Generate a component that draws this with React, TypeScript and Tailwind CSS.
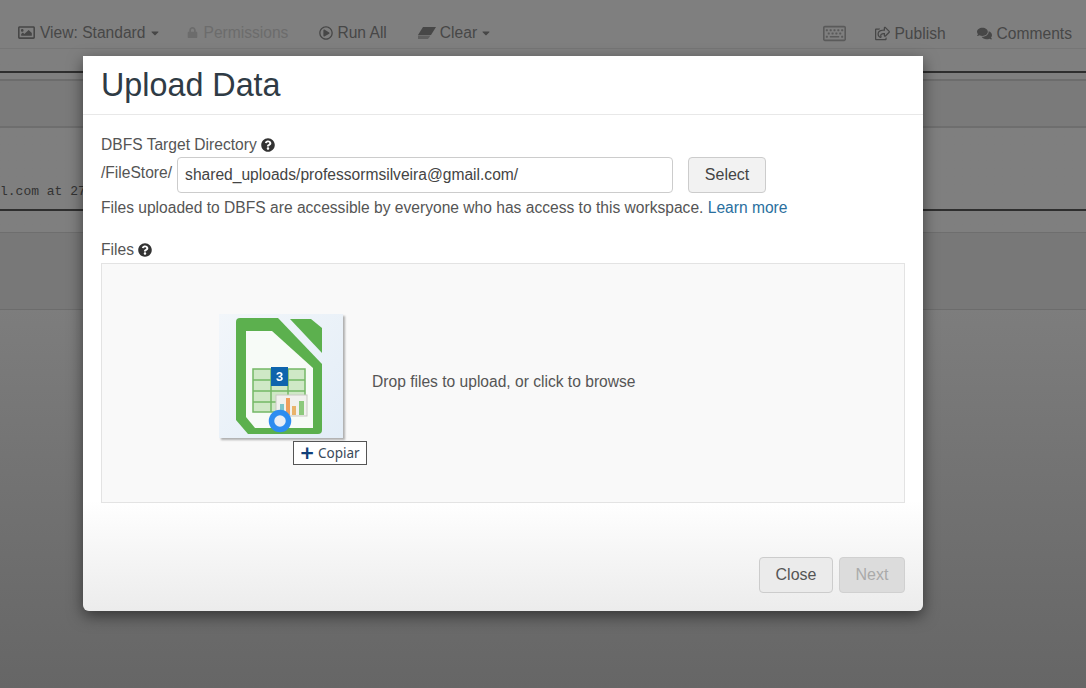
import { FaCaretDown, FaComments, FaLock, FaQuestionCircle, FaRegImage, FaRegKeyboard, FaRegPlayCircle, FaRegShareSquare } from "react-icons/fa";

function EraserIcon() {
  return (
    <svg width="18" height="14" viewBox="0 0 18 14" className="block">
      <path d="M5 1 H18 L13 9 H0 Z" fill="#474747" />
      <path d="M0 9.5 H12.5 L10 13 H0 Z" fill="#5f5f5f" />
    </svg>
  );
}

function CalcIcon() {
  return (
    <svg width="124" height="124" viewBox="0 0 124 124" className="block blur-[0.4px]">
      {/* page outline */}
      <path d="M17 8 Q17 4 21 4 H59 L103 50 V116 Q103 120 99 120 H29 L17 106 Z" fill="#5cb04e" />
      <path d="M27 17 H53 L94 54 V114 H36 L27 103 Z" fill="#f7fbf7" />
      <path d="M71 5 H92 L103 14 V39 Z" fill="#5cb04e" />
      {/* sheet */}
      <rect x="34" y="55" width="52" height="43" fill="#cfe8c6" stroke="#74b866" strokeWidth="1.5" />
      <path d="M34 66 H86 M34 77 H86 M34 88 H86 M52 55 V98 M69 55 V98" stroke="#74b866" strokeWidth="1.5" fill="none" />
      {/* chart */}
      <rect x="57" y="81" width="31" height="21" fill="#f1f1ee" stroke="#c9c9c4" />
      <rect x="61" y="90" width="4" height="11" fill="#7cc4c9" />
      <rect x="67" y="84" width="4" height="17" fill="#ef9f5d" />
      <rect x="73" y="92" width="4" height="9" fill="#e9b36a" />
      <rect x="80" y="87" width="5" height="14" fill="#8cc97c" />
      {/* count badge */}
      <rect x="52" y="53" width="17" height="19" fill="#0e64ad" />
      <text x="60.5" y="67" textAnchor="middle" fill="#ffffff" fontSize="13" fontWeight="700" fontFamily="Liberation Sans, sans-serif">3</text>
      {/* cursor ring */}
      <circle cx="61" cy="107" r="8.5" fill="#e8edf5" stroke="#2d8cf0" strokeWidth="5.5" />
    </svg>
  );
}

export default function App() {
  return (
    <div className="relative h-[688px] w-[1086px] overflow-hidden bg-gradient-to-b from-[#7f7f7f] from-[40%] to-[#666666] font-['Liberation_Sans',sans-serif] text-[15.6px] text-[#474747]">
      {/* page behind the dialog */}
      <div className="flex h-[49px] items-center justify-between border-b border-[#767676] pl-[18px] pr-[14px] pt-[18px]">
        <div className="flex items-center">
          <span className="flex items-center gap-[5px]"><FaRegImage className="text-[17px]" />View: Standard<FaCaretDown className="-ml-[1px] text-[12px]" /></span>
          <span className="ml-[26px] flex items-center gap-[5px] text-[#6c6c6c]"><FaLock className="text-[11px]" />Permissions</span>
          <span className="ml-[31px] flex items-center gap-[4px]"><FaRegPlayCircle className="text-[14px]" />Run All</span>
          <span className="ml-[31px] flex items-center gap-[4px]"><EraserIcon />Clear<FaCaretDown className="-ml-[1px] text-[12px]" /></span>
        </div>
        <div className="flex translate-y-[1px] items-center">
          <FaRegKeyboard className="text-[23px] text-[#5a5a5a]" />
          <span className="ml-[29px] flex items-center gap-[4px]"><FaRegShareSquare className="text-[15px]" />Publish</span>
          <span className="ml-[31px] flex items-center gap-[5px]"><FaComments className="text-[15px]" />Comments</span>
        </div>
      </div>
      <div className="mt-[22px] h-[2px] bg-[#2e2e2e]" />
      <div className="mt-[6px] h-[2px] bg-[#6c6c6c]" />
      <div className="h-[45px] bg-[#7a7a7a]" />
      <div className="h-[2px] bg-[#6e6e6e]" />
      <div className="flex h-[81px] items-end pb-[8px] font-['Liberation_Mono',monospace] text-[13px] text-[#333]">
        <span className="whitespace-nowrap">l.com at 27</span>
      </div>
      <div className="h-[2px] bg-[#2e2e2e]" />
      <div className="mt-[21px] h-[1px] bg-[#6e6e6e]" />
      <div className="h-[76px] bg-[#787878]" />
      <div className="h-[1px] bg-[#6c6c6c]" />

      {/* dialog */}
      <div className="absolute left-[83px] top-[56px] flex h-[555px] w-[840px] flex-col rounded-b-[6px] bg-gradient-to-b from-[#ffffff] from-[80%] to-[#ececec] shadow-[0_5px_15px_rgba(0,0,0,0.5)]">
        <div className="h-[59px] border-b border-[#e8e8e8] pl-[18px] pt-[8px]">
          <h1 className="text-[32.3px] leading-[42px] text-[#2f3b45]">Upload Data</h1>
        </div>
        <div className="flex flex-1 flex-col px-[18px] pt-[20px]">
          <div className="flex items-center gap-[4px] leading-[20px] text-[#555]">
            DBFS Target Directory <FaQuestionCircle className="text-[14px] text-[#333]" />
          </div>
          <div className="mt-[2px] flex items-start">
            <span className="mt-[6px] leading-[20px] text-[#555]">/FileStore/</span>
            <div className="ml-[5px] flex h-[36px] w-[496px] items-center rounded-[4px] border border-[#ccc] pl-[7px] text-[#444]">shared_uploads/professormsilveira@gmail.com/</div>
            <div className="ml-[15px] flex h-[36px] w-[78px] items-center justify-center rounded-[4px] border border-[#ccc] bg-[#f2f2f2] text-[16px] text-[#444]">Select</div>
          </div>
          <p className="mt-[5px] leading-[20px] text-[#555]">
            Files uploaded to DBFS are accessible by everyone who has access to this workspace. <span className="text-[#2a6f9e]">Learn more</span>
          </p>
          <div className="mt-[22px] flex items-center gap-[4px] leading-[20px] text-[#555]">
            Files <FaQuestionCircle className="text-[14px] text-[#333]" />
          </div>
          <div className="mt-[3px] flex h-[240px] items-start border border-[#e3e3e3] bg-[#f9f9f9] pl-[117px] pt-[50px]">
            <div className="relative h-[124px] w-[124px] shrink-0 bg-gradient-to-br from-[#f2f6fa] to-[#e3edf7] shadow-[2px_2px_2px_rgba(0,0,0,0.3)]">
              <CalcIcon />
              <div className="absolute left-[74px] top-[127px] flex h-[24px] w-[74px] items-center justify-center gap-[4px] border border-[#555] bg-white font-['Noto_Sans',sans-serif] text-[13.5px] text-[#3a4a5a]">
                <span className="text-[24px] font-semibold leading-none text-[#12407a]">+</span>Copiar
              </div>
            </div>
            <span className="ml-[29px] mt-[58px] leading-[20px] text-[#555]">Drop files to upload, or click to browse</span>
          </div>
          <div className="mt-[54px] flex justify-end gap-[6px]">
            <div className="flex h-[36px] w-[74px] items-center justify-center rounded-[4px] border border-[#ccc] bg-[#ebebeb] text-[16px] text-[#555]">Close</div>
            <div className="flex h-[36px] w-[66px] items-center justify-center rounded-[4px] border border-[#d0d0d0] bg-[#dcdcdc] text-[16px] text-[#aaa]">Next</div>
          </div>
        </div>
      </div>
    </div>
  );
}
